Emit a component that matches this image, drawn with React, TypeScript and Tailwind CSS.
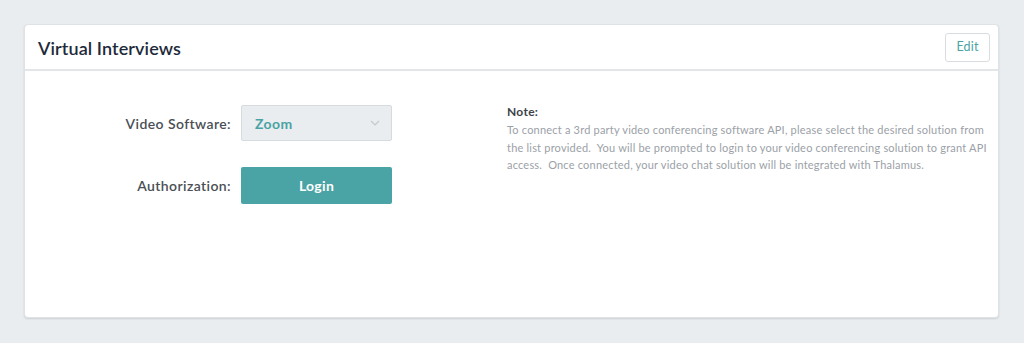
import React from "react";

export default function App() {
  return (
    <div
      className="w-[1024px] h-[343px] bg-[#e9edf0] pt-[24px] pl-[24px]"
      style={{ fontFamily: "Lato, 'Open Sans', sans-serif" }}
    >
      <div className="w-[975px] h-[294px] bg-white rounded-[4px] border border-[#dfe3e7] shadow-[0_1px_2px_rgba(0,0,0,0.12)] flex flex-col">
        <div className="h-[46px] flex items-center justify-between pl-[13px] pr-[8px] border-b-2 border-[#e3e6e9]">
          <h1 className="text-[18px] font-semibold text-[#1e2a3a] tracking-[0.1px] pt-[3px]">Virtual Interviews</h1>
          <button className="w-[45px] h-[29px] border border-[#d9dde1] rounded-[3px] text-[12.5px] tracking-[0.2px] text-[#4aa3a3] bg-white">
            Edit
          </button>
        </div>
        <div className="flex pt-[34px]">
          <div className="flex flex-col gap-[26px]">
            <div className="flex items-center">
              <div className="w-[206px] text-right text-[14px] font-semibold tracking-[0.4px] text-[#4a4f55]">Video Software:</div>
              <div className="ml-[10px] w-[151px] h-[36px] bg-[#e9edf0] border border-[#d6dbe0] rounded-[2px] flex items-center justify-between pl-[13px] pr-[11px]">
                <span className="text-[14px] font-bold tracking-[0.4px] text-[#4aa3a3]">Zoom</span>
                <svg width="10" height="6" viewBox="0 0 10 6" fill="none">
                  <path d="M1 1l4 4 4-4" stroke="#c3c8cd" strokeWidth="1.2" />
                </svg>
              </div>
            </div>
            <div className="flex items-center">
              <div className="w-[206px] text-right text-[14px] font-semibold tracking-[0.4px] text-[#4a4f55]">Authorization:</div>
              <button className="ml-[10px] w-[151px] h-[37px] bg-[#4aa3a4] rounded-[2px] text-white text-[14px] font-bold tracking-[0.3px]">
                Login
              </button>
            </div>
          </div>
          <div className="ml-[115px] w-[486px] -mt-[2px]">
            <div className="text-[12px] font-bold tracking-[0.3px] text-[#3d434a] leading-[18px]">Note:</div>
            <p className="text-[11px] tracking-[0.2px] text-[#9ba1a7] leading-[17.5px]">
              To connect a 3rd party video conferencing software API, please select the desired solution from the list provided.&nbsp; You will be prompted to login to your video conferencing solution to grant API access.&nbsp; Once connected, your video chat solution will be integrated with Thalamus.
            </p>
          </div>
        </div>
      </div>
    </div>
  );
}
